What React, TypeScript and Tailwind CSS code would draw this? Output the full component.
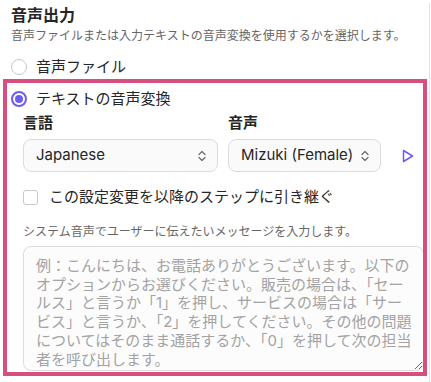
import React from 'react';

const font = { fontFamily: '"Inter", "Noto Sans CJK JP", sans-serif' };

function UpDown() {
  return (
    <svg width="8" height="12" viewBox="0 0 8 12" fill="none" stroke="#6b6b6b" strokeWidth="1.2" strokeLinecap="round" strokeLinejoin="round">
      <path d="M1 4.5 L4 1.5 L7 4.5" />
      <path d="M1 7.5 L4 10.5 L7 7.5" />
    </svg>
  );
}

function FakeSelect({ value, width }: { value: string; width: string }) {
  return (
    <div className={`${width} h-[33px] flex items-center justify-between pl-3 pr-[11px] rounded-lg border border-[#dcdcdc] bg-[#fafafa] text-[15px] text-[#262626]`}>
      <span>{value}</span>
      <UpDown />
    </div>
  );
}

export default function App() {
  return (
    <div className="relative w-[431px] h-[382px] bg-white overflow-hidden" style={font}>
      <div className="w-[430px] h-full border-r border-[#e3e3e3] pl-[11px] text-[#262626]">
        <h2 className="mt-[3px] text-[16px] font-bold leading-6">音声出力</h2>
        <p className="text-[12px] leading-[18px] text-[#666]">音声ファイルまたは入力テキストの音声変換を使用するかを選択します。</p>

        {/* file option */}
        <label className="mt-[11px] h-[22px] flex items-center gap-[9px]">
          <span className="w-4 h-4 rounded-full border border-[#c8c8c8] bg-white" />
          <span className="text-[15px]">音声ファイル</span>
        </label>

        {/* text-to-speech option */}
        <label className="mt-[10px] h-[22px] flex items-center gap-[9px]">
          <span className="w-4 h-4 rounded-full border-2 border-[#6c5cf2] flex items-center justify-center">
            <span className="w-2 h-2 rounded-full bg-[#6c5cf2]" />
          </span>
          <span className="text-[15px]">テキストの音声変換</span>
        </label>

        <div className="pl-3">
          <div className="mt-[3px] flex gap-[10px]">
            <div className="flex flex-col">
              <span className="h-5 text-[15px] font-bold leading-5">言語</span>
              <div className="mt-[6px]">
                <FakeSelect value="Japanese" width="w-[195px]" />
              </div>
            </div>
            <div className="flex flex-col">
              <span className="h-5 text-[15px] font-bold leading-5">音声</span>
              <div className="mt-[6px] flex items-center">
                <FakeSelect value="Mizuki (Female)" width="w-[153px]" />
                <svg className="ml-[21px]" width="12" height="14" viewBox="0 0 12 14" fill="none" stroke="#6c5cf2" strokeWidth="1.5" strokeLinejoin="round">
                  <path d="M1.5 1.5 L10.5 7 L1.5 12.5 Z" />
                </svg>
              </div>
            </div>
          </div>

          <label className="mt-[14px] h-[22px] flex items-center gap-[11px]">
            <span className="w-[15px] h-[15px] rounded-[3px] border border-[#c8c8c8] bg-white" />
            <span className="text-[15px]">この設定変更を以降のステップに引き継ぐ</span>
          </label>

          <p className="mt-[15px] text-[12px] leading-[18px] text-[#666]">システム音声でユーザーに伝えたいメッセージを入力します。</p>

          <textarea
            className="mt-[5px] block w-[401px] h-[125px] rounded-lg border border-[#dcdcdc] bg-[#fcfcfc] pl-3 pr-[9px] pt-[10px] text-[15px] leading-[18.7px] outline-none placeholder:text-[#a3a3a3]"
            placeholder="例：こんにちは、お電話ありがとうございます。以下のオプションからお選びください。販売の場合は、「セールス」と言うか「1」を押し、サービスの場合は「サービス」と言うか、「2」を押してください。その他の問題についてはそのまま通話するか、「0」を押して次の担当者を呼び出します。"
          />
        </div>
      </div>

      {/* highlight annotation */}
      <div className="absolute left-[3px] top-[79px] w-[424px] h-[297px] border-4 border-[#d64f7e] pointer-events-none" />
    </div>
  );
}
